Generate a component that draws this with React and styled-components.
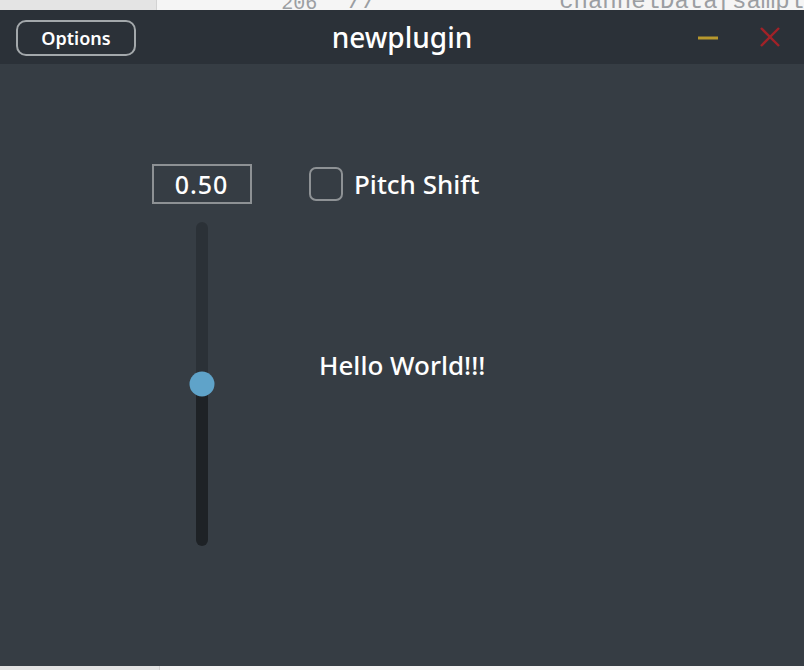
import React from "react";
import styled, { createGlobalStyle } from "styled-components";

const Global = createGlobalStyle`
  html, body { margin: 0; padding: 0; background: #f4f4f4; overflow: hidden; }
  body { font-family: "Noto Sans", "Open Sans", sans-serif; font-weight: 500; }
`;

const Page = styled.div`
  width: 804px;
  height: 670px;
  display: flex;
  flex-direction: column;
  position: relative;
`;

const EditorStrip = styled.div`
  height: ${(p) => p.$h}px;
  display: flex;
  overflow: hidden;
  flex-shrink: 0;
`;

const Gutter = styled.div`
  width: 160px;
  background: #e4e4e4;
  border-right: 1px solid #d2d2d2;
  box-sizing: border-box;
`;

const Code = styled.div`
  flex: 1;
  background: #f5f5f5;
  display: flex;
  align-items: flex-end;
  font-family: "Liberation Mono", "DejaVu Sans Mono", monospace;
  font-weight: 400;
  color: #9b9ea2;
  line-height: 1;
  white-space: pre;
`;

const CodePart = styled.span`
  font-size: ${(p) => p.$size}px;
  margin-left: ${(p) => p.$ml}px;
  margin-bottom: -${(p) => p.$drop}px;
`;

const Window = styled.div`
  flex: 1;
  display: flex;
  flex-direction: column;
  background: #363d44;
`;

const TitleBar = styled.div`
  height: 54px;
  background: #2b3138;
  display: flex;
  align-items: center;
  padding: 0 16px;
  position: relative;
`;

const OptionsButton = styled.button`
  width: 120px;
  height: 36px;
  border: 2px solid #a3a8ab;
  border-radius: 10px;
  background: transparent;
  color: #ffffff;
  font-family: "Noto Sans", sans-serif;
  font-size: 18px;
  font-weight: 600;
  box-sizing: border-box;
  padding: 0;
  margin-top: 1px;
`;

const Title = styled.div`
  position: absolute;
  left: 0;
  right: 0;
  top: 0;
  bottom: 0;
  display: flex;
  align-items: center;
  justify-content: center;
  color: #ffffff;
  font-size: 28px;
  pointer-events: none;
`;

const WinControls = styled.div`
  margin-left: auto;
  display: flex;
  align-items: center;
  gap: 40px;
  margin-right: 7px;
`;

const Body = styled.div`
  flex: 1;
  display: flex;
  gap: 58px;
  padding: 100px 0 0 152px;
`;

const LeftCol = styled.div`
  width: 99px;
  display: flex;
  flex-direction: column;
  align-items: center;
`;

const ValueBox = styled.div`
  width: 100px;
  height: 40px;
  border: 2px solid #8d9194;
  box-sizing: border-box;
  color: #ffffff;
  font-size: 25px;
  display: flex;
  align-items: center;
  justify-content: center;
  letter-spacing: 1px;
`;

const Track = styled.div`
  position: relative;
  width: 12px;
  height: 324px;
  margin-top: 18px;
  border-radius: 6px;
  background: linear-gradient(
    to bottom,
    #2b3137 0%,
    #2b3137 ${(p) => p.$split}%,
    #1e2226 ${(p) => p.$split}%,
    #1e2226 100%
  );
`;

const Thumb = styled.div`
  position: absolute;
  left: 50%;
  width: 25px;
  height: 25px;
  border-radius: 50%;
  background: #5fa3c9;
  transform: translate(-50%, -50%);
`;

const RightCol = styled.div`
  display: flex;
  flex-direction: column;
`;

const CheckRow = styled.label`
  height: 40px;
  display: flex;
  align-items: center;
  gap: 11px;
  color: #ffffff;
  font-size: 26px;
`;

const CheckBox = styled.span`
  width: 34px;
  height: 34px;
  border: 2px solid #8e9295;
  border-radius: 7px;
  box-sizing: border-box;
`;

const Hello = styled.div`
  color: #ffffff;
  font-size: 26px;
  margin: 143px 0 0 10px;
`;

export default function App() {
  const value = 0.5;
  return (
    <>
      <Global />
      <Page>
        <EditorStrip $h={10}>
          <Gutter />
          <Code>
            <CodePart $size={20} $ml={124} $drop={4}>206</CodePart>
            <CodePart $size={24} $ml={31} $drop={4}>//</CodePart>
            <CodePart $size={24} $ml={182} $drop={4}>channelData[sampl</CodePart>
          </Code>
        </EditorStrip>
        <Window>
          <TitleBar>
            <OptionsButton>Options</OptionsButton>
            <Title>newplugin</Title>
            <WinControls>
              <svg width="22" height="22" viewBox="0 0 22 22">
                <line x1="1" y1="12" x2="21" y2="12" stroke="#b7982d" strokeWidth="3" />
              </svg>
              <svg width="22" height="22" viewBox="0 0 22 22">
                <line x1="2" y1="2" x2="20" y2="20" stroke="#a12228" strokeWidth="2.4" />
                <line x1="20" y1="2" x2="2" y2="20" stroke="#a12228" strokeWidth="2.4" />
              </svg>
            </WinControls>
          </TitleBar>
          <Body>
            <LeftCol>
              <ValueBox>{value.toFixed(2)}</ValueBox>
              <Track $split={50}>
                <Thumb style={{ top: `${(1 - value) * 100}%` }} />
              </Track>
            </LeftCol>
            <RightCol>
              <CheckRow>
                <CheckBox />
                Pitch Shift
              </CheckRow>
              <Hello>Hello World!!!</Hello>
            </RightCol>
          </Body>
        </Window>
        <EditorStrip $h={4}>
          <Gutter />
          <Code />
        </EditorStrip>
      </Page>
    </>
  );
}
